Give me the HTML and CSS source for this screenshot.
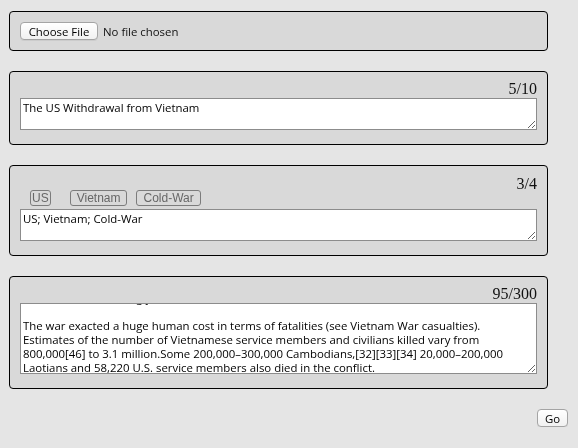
FILE: index.html
```html
<!DOCTYPE html>
<html lang="en">
<head>
<meta charset="utf-8">
<title>Article form</title>
<link rel="stylesheet" href="styles.css">
</head>
<body>
<main class="page">
  <section class="panel panel-file">
    <label class="btn file-btn">Choose File<input type="file" class="file-input"></label>
    <span class="file-name">No file chosen</span>
  </section>
  <section class="panel">
    <div class="count">5/10</div>
    <textarea class="field">The US Withdrawal from Vietnam</textarea>
  </section>
  <section class="panel">
    <div class="count count-tight">3/4</div>
    <div class="tags"><span class="tag tag-us">US</span><span class="tag tag-wide">Vietnam</span><span class="tag">Cold-War</span></div>
    <textarea class="field">US; Vietnam; Cold-War</textarea>
  </section>
  <section class="panel">
    <div class="count">95/300</div>
    <textarea class="field field-long" id="summary">Direct U.S. military involvement ended on 15 August 1973. The capture of Saigon by the North Vietnamese Army in April 1975 marked the end of the war, and North and South Vietnam were reunified the following year.

The war exacted a huge human cost in terms of fatalities (see Vietnam War casualties). Estimates of the number of Vietnamese service members and civilians killed vary from 800,000[46] to 3.1 million.Some 200,000–300,000 Cambodians,[32][33][34] 20,000–200,000 Laotians and 58,220 U.S. service members also died in the conflict.</textarea>
  </section>
  <div class="actions"><button class="btn go" type="button">Go</button></div>
</main>
<script src="script.js"></script>
</body>
</html>
```

FILE: styles.css
```css
html, body {
  margin: 0;
  background: #e5e5e5;
}

.page {
  padding: 11px 10px 0 9px;
  font-family: "Open Sans", "Liberation Sans", Arial, sans-serif;
  font-size: 11.4px;
  color: #000;
}

.panel {
  box-sizing: border-box;
  width: 539px;
  border: 1px solid #000;
  border-radius: 4px;
  background: #d9d9d9;
  padding: 10px;
  margin-bottom: 20px;
}

.panel-file {
  display: flex;
  align-items: center;
  gap: 5px;
}

.btn {
  box-sizing: border-box;
  display: inline-flex;
  align-items: center;
  justify-content: center;
  height: 18px;
  padding: 0;
  border: 1px solid #a4a4a4;
  border-radius: 4px;
  background: linear-gradient(#ffffff, #f1f1f1);
  box-shadow: 0 1px 0 rgba(0, 0, 0, 0.06);
  font-family: "Open Sans", "Liberation Sans", Arial, sans-serif;
  font-size: 11.4px;
  color: #000;
}

.file-btn {
  width: 78px;
}

.file-input {
  display: none;
}

.file-name {
  color: #111;
}

.count {
  height: 16px;
  line-height: 13px;
  text-align: right;
  font-family: "Liberation Serif", "Times New Roman", serif;
  font-size: 16px;
  color: #111;
}

.count-tight {
  height: 14px;
  line-height: 16px;
}

.tags {
  display: flex;
  height: 16px;
  margin-bottom: 3px;
}

.tag {
  box-sizing: border-box;
  height: 16px;
  line-height: 14px;
  padding: 0 6px;
  margin-left: 9px;
  border: 1px solid #7c7c7c;
  border-radius: 3px;
  color: #676767;
  font-family: "Liberation Sans", Arial, sans-serif;
  font-size: 12px;
}

.tag-us {
  padding: 0 1px;
  margin-left: 10px;
}

.tag-wide {
  margin-left: 19px;
}

.field {
  display: block;
  box-sizing: border-box;
  width: 100%;
  height: 32px;
  margin: 0 0 4px;
  padding: 2px 2px;
  border: 1px solid #8c8c8c;
  border-radius: 0;
  background: #fff;
  color: #000;
  font-family: "Open Sans", "Liberation Sans", Arial, sans-serif;
  font-size: 11.4px;
  line-height: 14px;
  outline: none;
}

.field-long {
  height: 71px;
  padding-bottom: 0;
}

.actions {
  display: flex;
  justify-content: flex-end;
}

.go {
  width: 31px;
}
```

FILE: script.js
```js
var summary = document.getElementById('summary');
summary.scrollTop = summary.scrollHeight - summary.clientHeight - 2;
```
